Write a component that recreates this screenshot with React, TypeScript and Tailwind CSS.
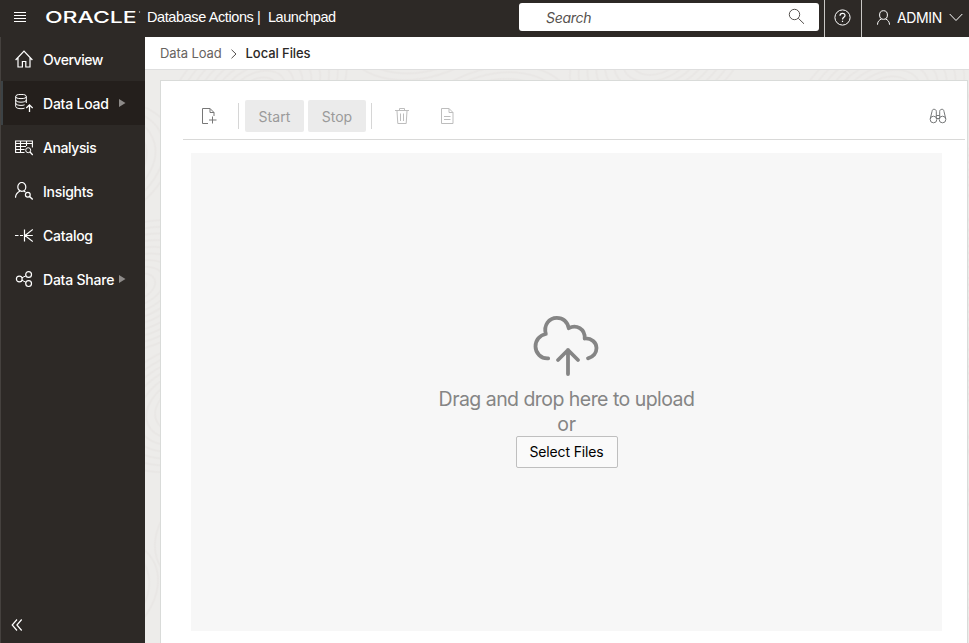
import type { ReactNode } from "react";

function Icon({ size = 18, sw = 1, className = "", children }: { size?: number; sw?: number; className?: string; children: ReactNode }) {
  return (
    <svg width={size} height={size} viewBox={`0 0 ${size} ${size}`} fill="none" stroke="currentColor" strokeWidth={sw} className={`shrink-0 ${className}`}>
      {children}
    </svg>
  );
}

const items: { label: string; width: string; active?: boolean; arrow?: boolean; icon: ReactNode }[] = [
  {
    label: "Overview",
    width: "tracking-[-0.44px]",
    icon: <path d="M.6 10 9 1.2 17.4 10M3 8v9h4.4v-5.500h3.400V17H15V8" strokeWidth="1.2" />,
  },
  {
    label: "Data Load",
    width: "tracking-[-0.22px]",
    active: true,
    arrow: true,
    icon: (
      <>
        <ellipse cx="6" cy="2.500" rx="5.300" ry="2.100" />
        <path d="M.7 2.500v10c0 1.300 2.300 2.200 5.300 2.200 1.500 0 2.700-.2 3.600-.6M11.300 2.500v6.500M.7 6c0 1.300 2.300 2.200 5.300 2.200s5.300-.9 5.300-2.200M.7 9.200c0 1.300 2.300 2.200 5.300 2.200 1.500 0 2.700-.2 3.600-.6" />
        <path d="M14.500 18v-7M11.300 14l3.200-3.200 3.200 3.200" strokeWidth="1.300" />
      </>
    ),
  },
  {
    label: "Analysis",
    width: "tracking-[-0.4px]",
    icon: (
      <>
        <path d="M9.500 14.500H.6V3h16.800v6.500M.6 5.500h16.800M.6 8.500H11M.6 11.500h9M5.500 3v11.500M11.500 3v5" strokeWidth="1.100" />
        <circle cx="13.200" cy="12.200" r="2.500" />
        <path d="m15 14 2.800 3" strokeWidth="1.300" />
      </>
    ),
  },
  {
    label: "Insights",
    width: "tracking-[-0.28px]",
    icon: (
      <>
        <ellipse cx="6.800" cy="4.900" rx="4" ry="4.400" strokeWidth="1.200" />
        <path d="M.5 15.800c0-3.300 1.800-5.400 4.500-6.800M8.500 9l2 1" strokeWidth="1.200" />
        <circle cx="12.800" cy="12.800" r="2.400" strokeWidth="1.200" />
        <path d="m14.500 14.500 3.200 3" strokeWidth="1.400" />
      </>
    ),
  },
  {
    label: "Catalog",
    width: "tracking-[-0.28px]",
    icon: <path d="M0 9.500h3.500M5 9.500h3M9 9.500h8.800M9.500 3.500v12M17.800 3.500 10 9.500l7.800 6" strokeWidth="1.200" />,
  },
  {
    label: "Data Share",
    width: "tracking-[-0.22px]",
    arrow: true,
    icon: (
      <>
        <circle cx="4.300" cy="9" r="2.900" strokeWidth="1.200" />
        <circle cx="13.600" cy="4.500" r="2.900" strokeWidth="1.200" />
        <circle cx="13.600" cy="13.600" r="2.900" strokeWidth="1.200" />
        <path d="m6.900 7.800 4-2M6.900 10.200l4 2.100" />
      </>
    ),
  },
];

function Header() {
  return (
    <header className="flex h-[37px] shrink-0 items-center bg-[#2d2926] text-white">
      <Icon size={12} className="ml-[14px] mb-[3px]">
        <path d="M0 1.500h12M0 4.500h12M0 7.500h12M0 10.500h12" />
      </Icon>
      <svg width="98" height="24" viewBox="0 0 98 24" className="-mr-[2px] ml-[19px] mb-[3px] shrink-0 overflow-visible" aria-label="ORACLE">
        <text x="0" y="18" textLength="58" lengthAdjust="spacingAndGlyphs" transform="scale(1.580 1)" fill="white" fontFamily="Inter, sans-serif" fontSize="16.500" fontWeight="500">ORACLE</text>
        <circle cx="94.500" cy="7" r=".7" fill="#ccc" />
      </svg>
      <span className="ml-[6px] mb-px w-[108px] shrink-0 whitespace-nowrap font-['Liberation_Sans',Arial,sans-serif] text-[14.500px] tracking-[-0.4px]">Database Actions</span>
      <span className="mb-[2px] w-[13px] shrink-0 pl-[2px] font-['Liberation_Sans',Arial,sans-serif] text-[14.500px]">|</span>
      <span className="mb-px whitespace-nowrap font-['Liberation_Sans',Arial,sans-serif] text-[14.500px] tracking-[-0.45px]">Launchpad</span>
      <div className="ml-auto mb-[3px] flex h-[28px] w-[300px] shrink-0 items-center justify-between rounded-[3px] bg-white pl-[27px] pr-[14px] text-[#55514e]">
        <span className="text-[14px] italic tracking-[-0.3px]">Search</span>
        <Icon size={17} className="mb-[2px]">
          <circle cx="6.500" cy="6.500" r="5.200" />
          <path d="m10.300 10.300 5.700 5.500" />
        </Icon>
      </div>
      <div className="ml-[5px] flex h-[37px] w-[38px] shrink-0 items-center justify-center border-x border-[#c9c7c5]">
        <Icon size={17} className="mb-[3px] mr-px">
          <circle cx="8.500" cy="8.500" r="7.600" />
          <path d="M6 6.700c0-3 5-3.200 5-.3 0 2-2.500 1.900-2.500 4.200M8.500 11.800v1.300" strokeWidth="1.200" />
        </Icon>
      </div>
      <div className="flex h-[37px] w-[107px] shrink-0 items-center pb-[3px] pl-[14px]">
        <Icon size={15}>
          <ellipse cx="7.500" cy="5" rx="3.900" ry="4.300" />
          <path d="M1.500 14.700c0-3 1.500-4.600 4-5.800M13.500 14.700c0-3-1.500-4.600-4-5.800" />
        </Icon>
        <span className="ml-[6px] w-[46px] text-[14px] tracking-[-0.35px]">ADMIN</span>
        <svg width="14" height="9" fill="none" stroke="currentColor" className="ml-[6px] shrink-0"><path d="m.7 1 6.300 6.500L13.300 1" /></svg>
      </div>
    </header>
  );
}

function Sidebar() {
  return (
    <nav className="flex w-[145px] shrink-0 flex-col border-l border-[#45413e] bg-[#2d2926] text-white">
      {items.map((it) => (
        <div key={it.label} className={`flex h-[44px] shrink-0 items-center ${it.active ? "border-l-2 border-[#3c4245] bg-[#241f1c] pl-[12px]" : "pl-[14px]"}`}>
          <Icon size={18}>{it.icon}</Icon>
          <span className={`ml-[10px] whitespace-nowrap text-[14px] font-medium ${it.width}`}>{it.label}</span>
          {it.arrow && (
            <svg width="7" height="8" className={it.active ? "ml-[10px]" : "ml-[5px]"}><path d="M0 0 6.500 4 0 8Z" fill="#8d8a88" /></svg>
          )}
        </div>
      ))}
      <Icon size={12} sw={1.2} className="mt-auto mb-[12px] ml-[10px]">
        <path d="M6 .5 1.200 6 6 11.500M10.700.5 5.900 6l4.800 5.500" />
      </Icon>
    </nav>
  );
}

function Texture() {
  return (
    <svg className="absolute inset-0 h-full w-full" fill="none" stroke="#e9e7e5" strokeWidth="2">
      <defs>
        <pattern id="ripple" width="190" height="130" patternUnits="userSpaceOnUse" patternTransform="rotate(-24)">
          {[6, 12, 18, 24, 30, 36, 42, 48, 54, 60].map((r) => (
            <ellipse key={r} cx="95" cy="65" rx={r * 1.55} ry={r} />
          ))}
        </pattern>
      </defs>
      <rect width="100%" height="100%" fill="url(#ripple)" stroke="none" />
    </svg>
  );
}

function Toolbar() {
  return (
    <div className="ml-[22px] mr-[2px] flex h-[59px] shrink-0 items-center border-b border-[#d9d9d8] pt-[12px] text-[14px] text-[#9a9a9a]">
      <Icon size={18} className="ml-[17px] text-[#777]">
        <path d="M8 16.500H2.500V1.500H10l4 4V9M10 1.500v4h4M12.500 9.500v7M9 13h7.500" />
      </Icon>
      <div className="ml-[20px] h-[26px] w-px bg-[#d6d6d6]" />
      <button className="ml-[6px] h-[32px] w-[59px] rounded-[2px] bg-[#ebebeb] tracking-[0.1px]">Start</button>
      <button className="ml-[4px] h-[32px] w-[58px] rounded-[2px] bg-[#ebebeb]">Stop</button>
      <div className="ml-[5px] h-[26px] w-px bg-[#d6d6d6]" />
      <Icon size={18} className="ml-[21px] text-[#bdbdbd]">
        <path d="M2 3.500h14M6.500 3.500v-2h5v2M4 4l.8 12.500h8.400L14 4M7.500 6.500V14M10.500 6.500V14" />
      </Icon>
      <Icon size={18} className="ml-[27px] text-[#bdbdbd]">
        <path d="M3.500 1.500H11l4 4v11H3.500ZM11 1.500v4h4M6 9.500h6.500M6 12.500h6.500" />
      </Icon>
      <Icon size={18} className="ml-auto mr-[18px] text-[#77797a]">
        <circle cx="4.500" cy="12.500" r="3.300" />
        <circle cx="13.500" cy="12.500" r="3.300" />
        <path d="M1.200 12 3 4.500c.3-1.700.8-2.200 2-2.200s2.300.7 2.300 2V11.500M16.800 12 15 4.500c-.3-1.700-.8-2.200-2-2.200s-2.300.7-2.300 2V11.500M7.300 8.500h3.400M7.300 11.500h3.400" />
      </Icon>
    </div>
  );
}

export default function App() {
  return (
    <div className="flex h-[643px] w-[969px] flex-col overflow-hidden bg-white font-[Inter,sans-serif]">
      <Header />
      <div className="flex min-h-0 flex-1">
        <Sidebar />
        <main className="flex min-w-0 flex-1 flex-col">
          <div className="flex h-[33px] shrink-0 items-center border-b border-[#dedede] pl-[15px] pt-[2px] text-[13px]">
            <span className="tracking-[-0.1px] text-[#67635f]">Data Load</span>
            <svg width="6" height="10" fill="none" stroke="#55514e" className="mx-[9px]"><path d="m.5.7 4.500 4.300L.5 9.300" /></svg>
            <span className="font-medium tracking-[-0.08px] text-[#2b2826]">Local Files</span>
          </div>
          <div className="relative flex min-h-0 flex-1 bg-[#edecea] pl-[15px] pr-px pt-[10px]">
            <Texture />
            <section className="relative flex min-w-0 flex-1 flex-col border border-b-0 border-[#d9dbd9] bg-white">
              <Toolbar />
              <div className="ml-[30px] mt-[13px] flex h-[478px] w-[751px] shrink-0 flex-col items-center bg-[#f7f7f7] pt-[162px]">
                <svg width="66" height="62" fill="none" stroke="#858585" strokeWidth="3.800" strokeLinecap="round" strokeLinejoin="round" className="mr-px shrink-0">
                  <path d="M15.200 43.300C8 43.800 2.500 38 2.500 31.500c0-6.500 4.300-11.300 10.300-12.500C10.500 10 16 2.800 23.800 2.800c6.500 0 10.600 4.300 12 10.400 7.500-4.200 16.400.8 15.900 10.300C58.500 23 63.500 27.700 63.500 33c0 5-3.200 9-8.500 10.300" />
                  <path d="M35 59V35M25 45 35 35 45 45" />
                </svg>
                <p className="mt-[10px] whitespace-nowrap text-[19.500px] leading-[25px] tracking-[-0.54px] text-[#858585]">Drag and drop here to upload</p>
                <p className="text-[19.500px] leading-[25px] tracking-[-0.3px] text-[#858585]">or</p>
                <button className="-mt-px h-[32px] w-[102px] rounded-[2px] border border-[#bfbfbf] bg-[#fafafa] pb-[2px] text-[14px] tracking-[-0.16px] text-black">Select Files</button>
              </div>
            </section>
          </div>
        </main>
      </div>
    </div>
  );
}
